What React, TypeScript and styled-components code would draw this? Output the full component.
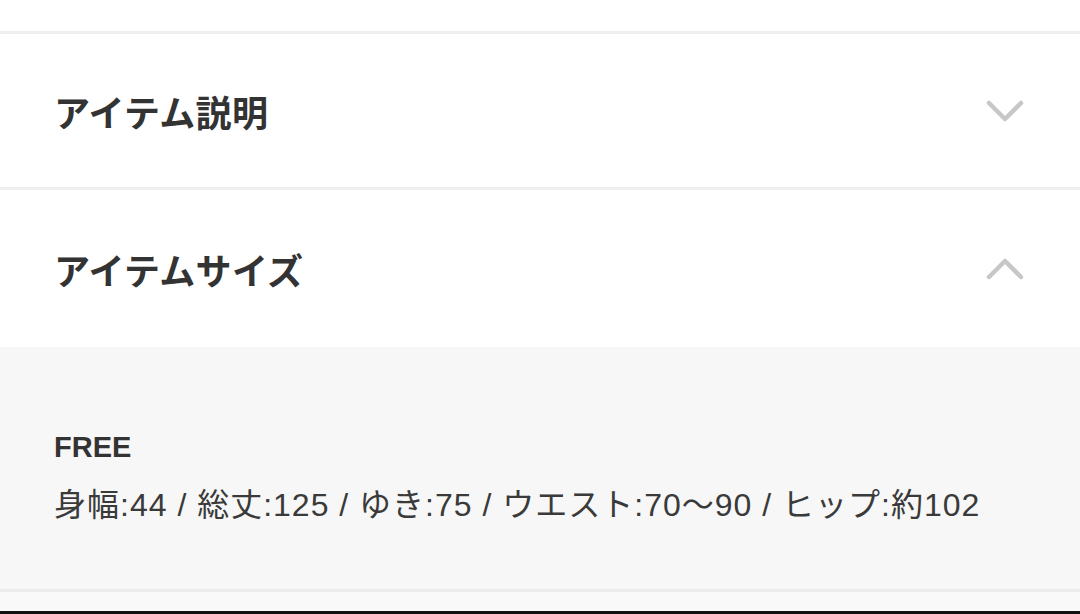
import styled, { createGlobalStyle } from 'styled-components';

const GlobalStyle = createGlobalStyle`
  html, body {
    margin: 0;
    padding: 0;
    background: #ffffff;
    font-family: "Noto Sans CJK JP", "Noto Sans", sans-serif;
    color: #333333;
  }
`;

const Page = styled.div`
  width: 1080px;
  height: 614px;
  overflow: hidden;
  display: flex;
  flex-direction: column;
`;

const TopStrip = styled.div`
  height: 31px;
  background: #ffffff;
  border-bottom: 3px solid #efefef;
`;

const Head = styled.div<{ $height: number; $border?: boolean }>`
  height: ${(p) => p.$height}px;
  display: flex;
  align-items: center;
  justify-content: space-between;
  padding: 0 54px 0 54px;
  background: #ffffff;
  border-bottom: ${(p) => (p.$border ? '3px solid #efefef' : 'none')};
`;

const Title = styled.h2`
  margin: 0;
  font-size: 36px;
  font-weight: 700;
  color: #333333;
  letter-spacing: 0.3px;
`;

const Chevron = styled.svg`
  width: 42px;
  height: 26px;
  flex-shrink: 0;
`;

const Panel = styled.div`
  background: #f7f7f7;
  padding: 80px 54px 0 54px;
  height: 162px;
  border-bottom: 3px solid #ebebeb;
  display: flex;
  flex-direction: column;
  gap: 16px;
`;

const SizeName = styled.div`
  font-family: "Liberation Sans", "Noto Sans CJK JP", sans-serif;
  font-size: 29px;
  font-weight: 700;
  line-height: 40px;
  color: #333333;
`;

const SizeSpec = styled.div`
  font-family: "Liberation Sans", "Noto Sans CJK JP", sans-serif;
  font-size: 32px;
  line-height: 44px;
  letter-spacing: 1px;
  color: #3a3a3a;
  white-space: nowrap;
`;

const Footer = styled.div`
  flex: 1;
  background: #f9f9f9;
  border-bottom: 3px solid #111111;
`;

function Arrow({ up }: { up?: boolean }) {
  return (
    <Chevron viewBox="0 0 42 26">
      <polyline
        points={up ? '5,21 21,5 37,21' : '5,5 21,21 37,5'}
        fill="none"
        stroke="#c7c7c7"
        strokeWidth="4.5"
        strokeLinecap="round"
        strokeLinejoin="round"
      />
    </Chevron>
  );
}

export default function App() {
  return (
    <Page>
      <GlobalStyle />
      <TopStrip />
      <Head $height={153} $border>
        <Title>アイテム説明</Title>
        <Arrow />
      </Head>
      <Head $height={157}>
        <Title>アイテムサイズ</Title>
        <Arrow up />
      </Head>
      <Panel>
        <SizeName>FREE</SizeName>
        <SizeSpec>身幅:44 / 総丈:125 / ゆき:75 / ウエスト:70〜90 / ヒップ:約102</SizeSpec>
      </Panel>
      <Footer />
    </Page>
  );
}
